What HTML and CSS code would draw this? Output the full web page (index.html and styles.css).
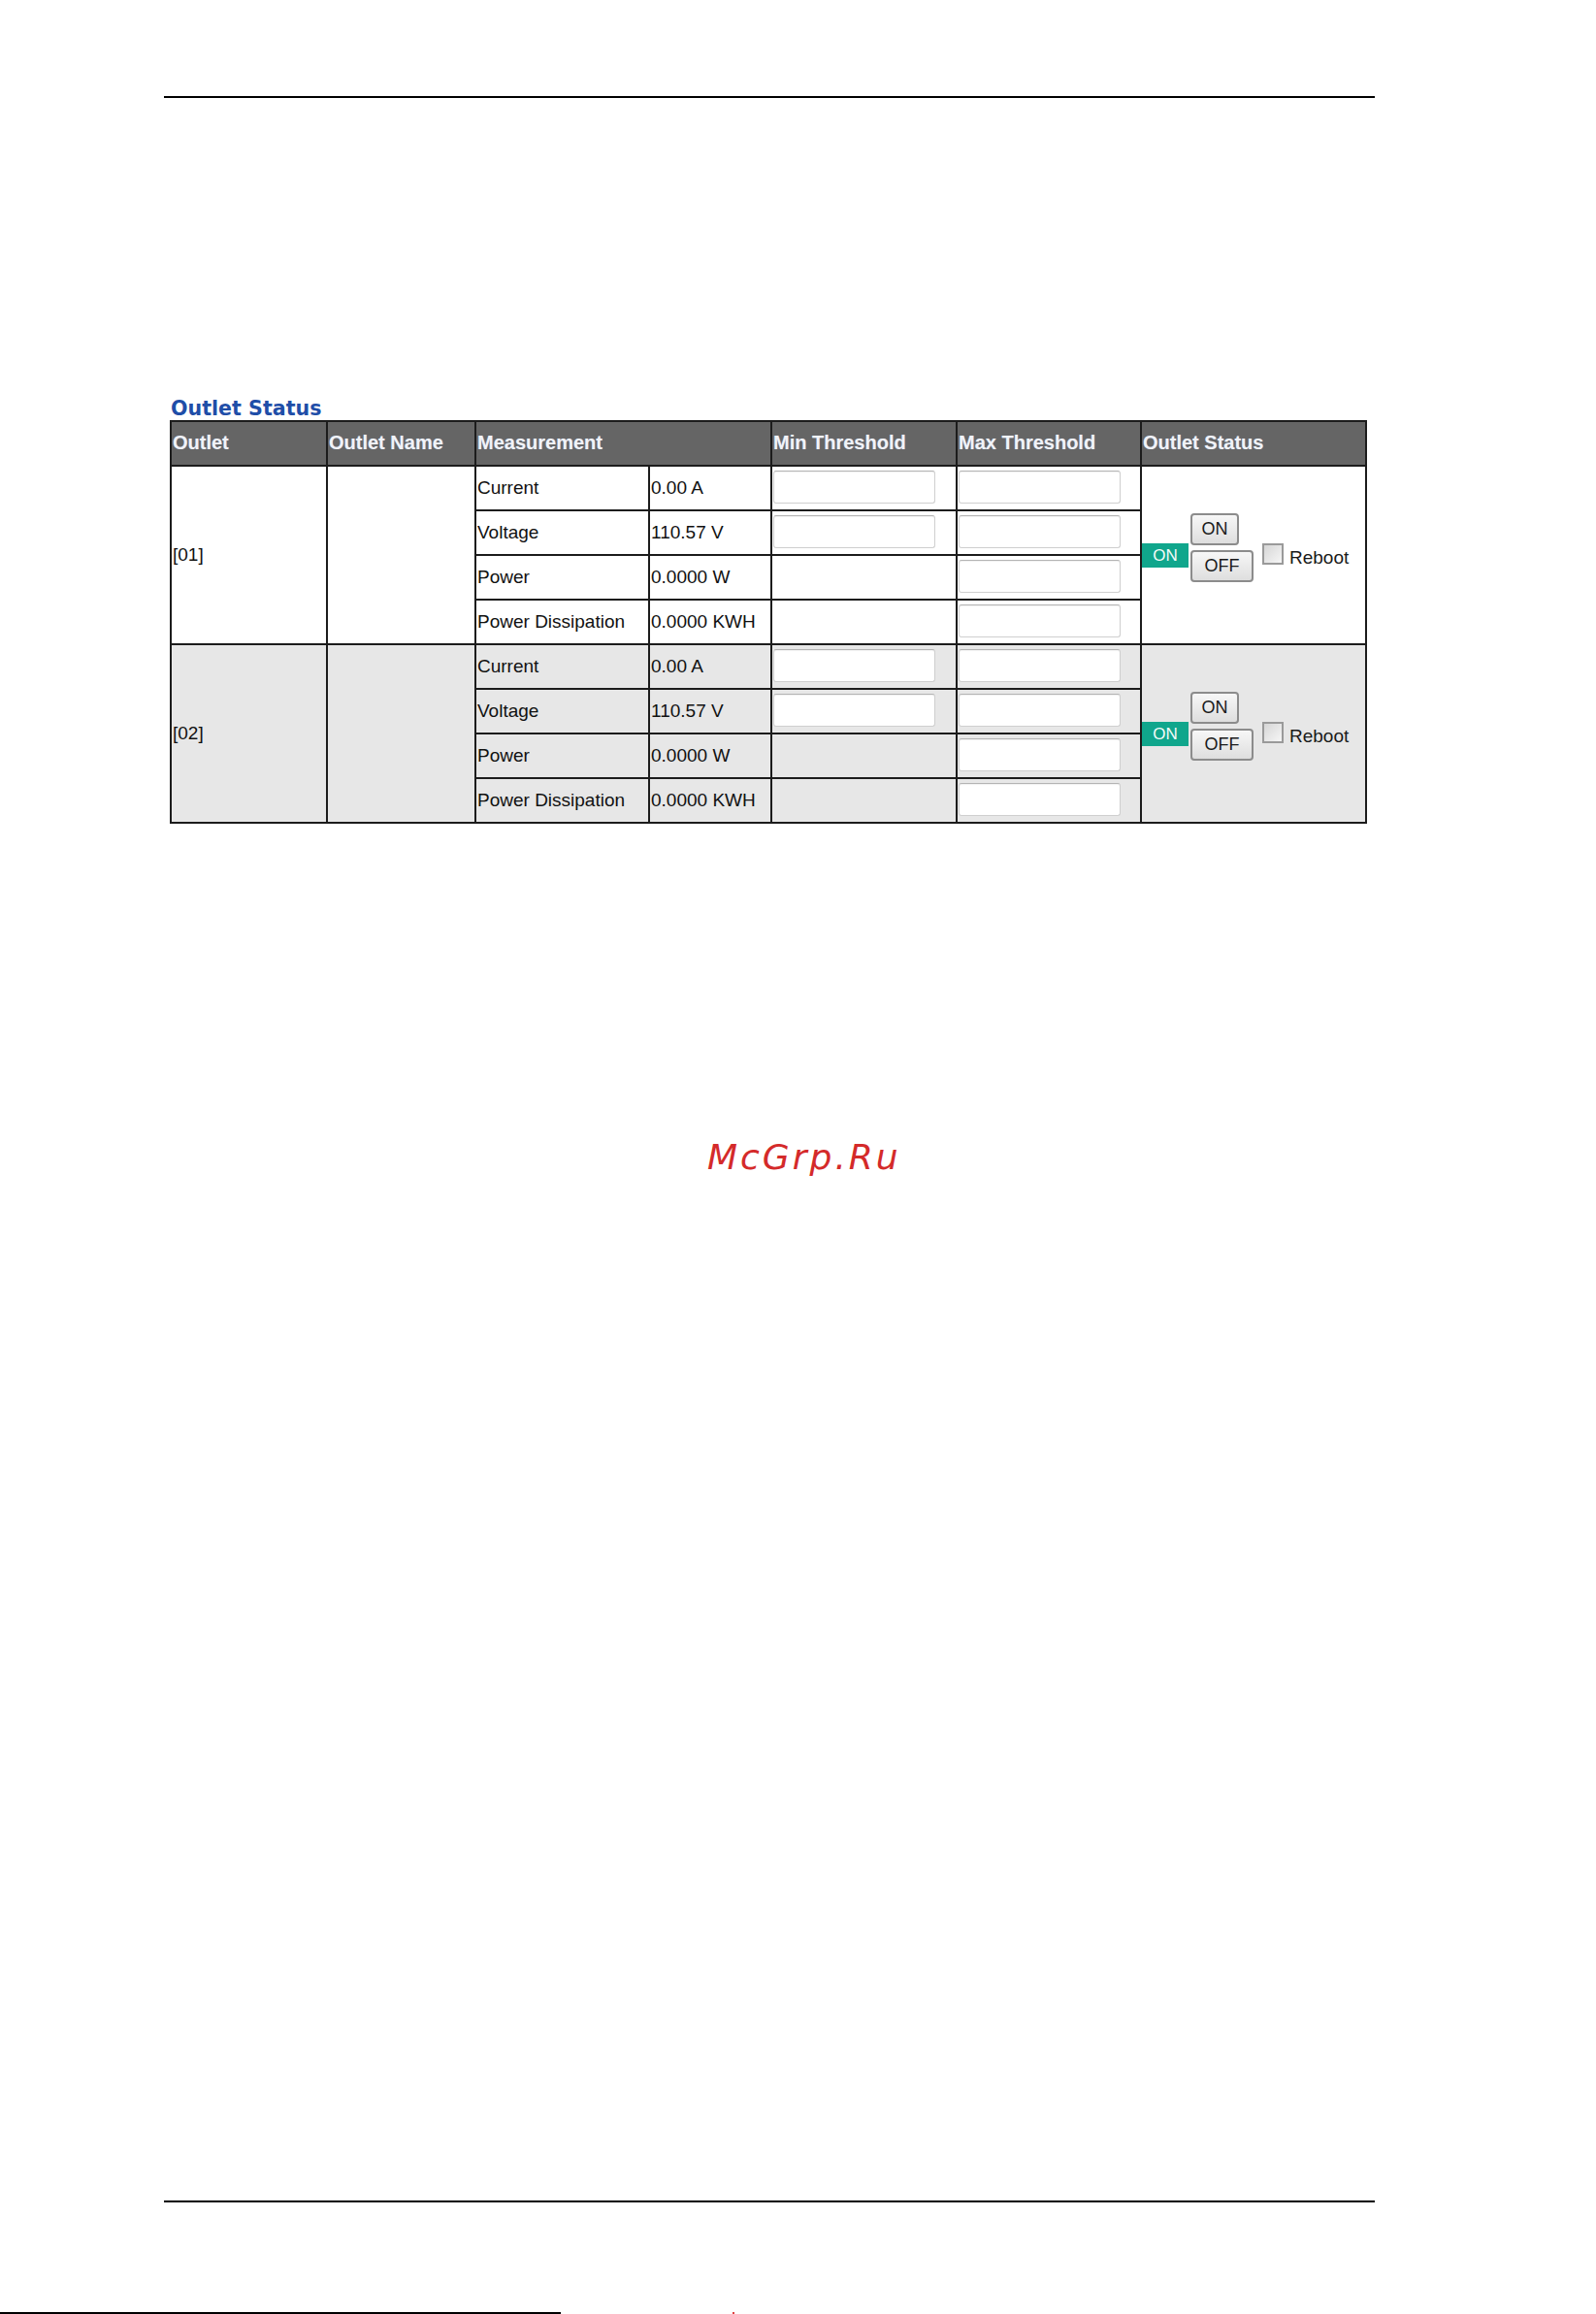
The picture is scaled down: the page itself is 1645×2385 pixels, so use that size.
FILE: index.html
```html
<!DOCTYPE html>
<html lang="en">
<head>
<meta charset="utf-8">
<title>Outlet Status</title>
<link rel="stylesheet" href="styles.css">
</head>
<body>
<div class="page">
  <div class="rule"></div>

  <h2 class="title">Outlet Status</h2>

  <table class="outlets">
    <colgroup>
      <col class="c-outlet">
      <col class="c-name">
      <col class="c-label">
      <col class="c-value">
      <col class="c-min">
      <col class="c-max">
      <col class="c-status">
    </colgroup>
    <thead>
      <tr>
        <th>Outlet</th>
        <th>Outlet Name</th>
        <th colspan="2">Measurement</th>
        <th>Min Threshold</th>
        <th>Max Threshold</th>
        <th>Outlet Status</th>
      </tr>
    </thead>
    <tbody class="odd">
      <tr>
        <td rowspan="4">[01]</td>
        <td rowspan="4"></td>
        <td>Current</td>
        <td>0.00 A</td>
        <td class="in"><input type="text" class="field"></td>
        <td class="in"><input type="text" class="field"></td>
        <td rowspan="4" class="status">
          <div class="status-box">
            <span class="badge">ON</span>
            <div class="btns">
              <button class="btn">ON</button>
              <button class="btn">OFF</button>
            </div>
            <span class="check"></span>
            <span class="reboot">Reboot</span>
          </div>
        </td>
      </tr>
      <tr>
        <td>Voltage</td>
        <td>110.57 V</td>
        <td class="in"><input type="text" class="field"></td>
        <td class="in"><input type="text" class="field"></td>
      </tr>
      <tr>
        <td>Power</td>
        <td>0.0000 W</td>
        <td></td>
        <td class="in"><input type="text" class="field"></td>
      </tr>
      <tr>
        <td>Power Dissipation</td>
        <td>0.0000 KWH</td>
        <td></td>
        <td class="in"><input type="text" class="field"></td>
      </tr>
    </tbody>
    <tbody class="even">
      <tr>
        <td rowspan="4">[02]</td>
        <td rowspan="4"></td>
        <td>Current</td>
        <td>0.00 A</td>
        <td class="in"><input type="text" class="field"></td>
        <td class="in"><input type="text" class="field"></td>
        <td rowspan="4" class="status">
          <div class="status-box">
            <span class="badge">ON</span>
            <div class="btns">
              <button class="btn">ON</button>
              <button class="btn">OFF</button>
            </div>
            <span class="check"></span>
            <span class="reboot">Reboot</span>
          </div>
        </td>
      </tr>
      <tr>
        <td>Voltage</td>
        <td>110.57 V</td>
        <td class="in"><input type="text" class="field"></td>
        <td class="in"><input type="text" class="field"></td>
      </tr>
      <tr>
        <td>Power</td>
        <td>0.0000 W</td>
        <td></td>
        <td class="in"><input type="text" class="field"></td>
      </tr>
      <tr>
        <td>Power Dissipation</td>
        <td>0.0000 KWH</td>
        <td></td>
        <td class="in"><input type="text" class="field"></td>
      </tr>
    </tbody>
  </table>

  <div class="watermark">McGrp.Ru</div>

  <div class="rule rule-bottom"></div>

  <div class="edge">
    <span class="edge-line"></span>
    <span class="edge-dot"></span>
  </div>
</div>
</body>
</html>
```

FILE: styles.css
```css
html, body {
  margin: 0;
  padding: 0;
  background: #ffffff;
}

.page {
  width: 1645px;
  height: 2385px;
  overflow: hidden;
  padding-top: 99px;
  box-sizing: border-box;
  font-family: "Liberation Sans", Arial, sans-serif;
  color: #111111;
}

.rule {
  margin-left: 169px;
  width: 1248px;
  height: 2px;
  background: #000000;
}

.title {
  margin: 309px 0 1px 176px;
  font-family: "DejaVu Sans", Verdana, sans-serif;
  font-weight: bold;
  font-size: 20.6px;
  line-height: 22px;
  color: #1f4ea8;
}

.outlets {
  margin-left: 175px;
  width: 1232px;
  table-layout: fixed;
  border-collapse: collapse;
  font-size: 19px;
}

.c-outlet { width: 161px; }
.c-name { width: 153px; }
.c-label { width: 179px; }
.c-value { width: 126px; }
.c-min { width: 191px; }
.c-max { width: 190px; }
.c-status { width: 232px; }

.outlets th,
.outlets td {
  border: 2px solid #1c1c1c;
  padding: 0 0 0 1px;
  text-align: left;
  vertical-align: middle;
  white-space: nowrap;
}

.outlets tr {
  height: 46px;
}

.outlets th {
  background: #656565;
  color: #f1f3f8;
  font-weight: bold;
  font-size: 20px;
  padding-bottom: 2px;
  text-shadow: 0 0 1px rgba(150, 170, 210, 0.7);
}

.odd td {
  background: #ffffff;
}

.even td {
  background: #e7e7e7;
}

.outlets td.in {
  padding: 0 0 0 1px;
}

.field {
  display: block;
  box-sizing: border-box;
  width: 167px;
  height: 34px;
  margin: -2px 0 0 0;
  padding: 0 4px;
  border: 1px solid #cfcfcf;
  border-top-color: #b4b4b4;
  border-radius: 3px;
  background: #ffffff;
  box-shadow: inset 0 1px 1px rgba(0, 0, 0, 0.06);
  font-family: "Liberation Sans", Arial, sans-serif;
  font-size: 16px;
}

.outlets td.status {
  padding: 0;
}

.status-box {
  display: flex;
  align-items: center;
}

.badge {
  width: 48px;
  height: 25px;
  background: #10a68c;
  color: #f4fbf9;
  font-size: 17px;
  line-height: 25px;
  text-align: center;
}

.btns {
  display: flex;
  flex-direction: column;
  align-items: flex-start;
  gap: 5px;
  margin: 0 0 15px 2px;
}

.btn {
  box-sizing: border-box;
  height: 33px;
  padding: 0;
  border: 2px solid #8c8c8c;
  border-radius: 4px;
  background: linear-gradient(#f7f7f7, #dedede);
  color: #1a1a1a;
  font-family: "Liberation Sans", Arial, sans-serif;
  font-size: 18px;
  line-height: 29px;
  cursor: pointer;
}

.btn:first-child {
  width: 50px;
}

.btn:last-child {
  width: 65px;
}

.check {
  box-sizing: border-box;
  width: 22px;
  height: 22px;
  margin-left: 9px;
  margin-bottom: 2px;
  border: 2px solid #9a9a9a;
  background: linear-gradient(135deg, #d6d6d6, #f6f6f6);
}

.reboot {
  margin-left: 6px;
  font-size: 19px;
  color: #1a1a1a;
  padding-top: 6px;
}

.watermark {
  margin: 324px 0 0 729px;
  font-family: "DejaVu Sans", Verdana, sans-serif;
  font-style: oblique;
  font-size: 36px;
  line-height: 40px;
  letter-spacing: 3px;
  color: #d42a2a;
}

.rule-bottom {
  margin-top: 1055px;
}

.edge {
  display: flex;
  align-items: flex-end;
  margin-top: 113px;
  height: 2px;
}

.edge-line {
  width: 578px;
  height: 2px;
  background: #000000;
}

.edge-dot {
  width: 2px;
  height: 2px;
  margin-left: 177px;
  background: #e04040;
}
```
